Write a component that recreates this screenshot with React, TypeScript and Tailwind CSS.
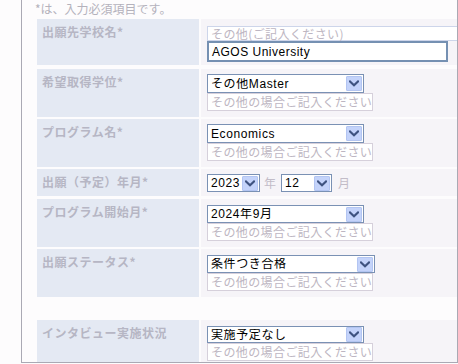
import React from "react";

const jp = "font-['Noto_Sans_CJK_JP','Liberation_Sans',sans-serif]";
const ui = "font-['Liberation_Sans','Noto_Sans_CJK_JP',sans-serif]";

function Chevron() {
  return (
    <svg width="10" height="7" viewBox="0 0 10 7">
      <path d="M1 1.5 L5 5.2 L9 1.5" fill="none" stroke="#3f5380" strokeWidth="2.2" strokeLinecap="square" />
    </svg>
  );
}

function Select({ value, w, h = 19 }: { value: string; w: number; h?: number }) {
  return (
    <div
      className="flex items-center bg-white border border-[#7a91b4] shrink-0"
      style={{ width: w, height: h }}
    >
      <span className={`flex-1 pl-[3px] text-[12px] leading-none text-black tracking-[0.6px] whitespace-nowrap overflow-hidden ${ui}`}>
        {value}
      </span>
      <div className="w-[16px] h-[15px] mr-[1px] flex items-center justify-center bg-[#c4d3fa] border border-[#b3c5f2] rounded-[1px]">
        <Chevron />
      </div>
    </div>
  );
}

function Hint({ w = 166, h = 18 }: { w?: number; h?: number }) {
  return (
    <div
      className={`flex items-center pl-[3px] bg-white border border-[#d6d0db] text-[12px] leading-none text-[#bdb6c2] tracking-[0.4px] whitespace-nowrap overflow-hidden ${jp}`}
      style={{ width: w, height: h }}
    >
      その他の場合ご記入ください
    </div>
  );
}

function Row({ label, h, mt, pt, children }: { label: string; h: number; mt: number; pt: number; children: React.ReactNode }) {
  return (
    <div className="flex gap-[2px] ml-[15px]" style={{ height: h, marginTop: mt }}>
      <div className={`w-[162px] bg-[#e4e9f3] pl-[5px] pt-[6px] text-[12px] leading-[14px] font-bold text-[#b6b6c4] tracking-[0.5px] whitespace-nowrap ${jp}`}>
        {label}
      </div>
      <div className="flex-1 bg-[#f6f4f8] pl-[6px] flex flex-col overflow-hidden" style={{ paddingTop: pt }}>
        {children}
      </div>
    </div>
  );
}

export default function App() {
  return (
    <div className="w-[458px] h-[364px] bg-[#fdfcfd] overflow-hidden">
      <div className="ml-[21px] w-[437px] h-[363px] border-l border-r border-b border-[#aaa9b4] overflow-hidden">
        <div className={`h-[19px] pl-[13px] text-[12px] leading-[17px] text-[#b4b2bc] ${jp}`}>
          *は、入力必須項目です。
        </div>

        <Row label="出願先学校名*" h={46} mt={0} pt={7}>
          <div
            className={`w-[260px] h-[15px] shrink-0 flex items-center pl-[3px] bg-white border border-[#cdd5ea] text-[12px] leading-none text-[#bdb6c2] tracking-[0.4px] whitespace-nowrap ${jp}`}
          >
            その他(ご記入ください)
          </div>
          <div className={`w-[241px] h-[21px] shrink-0 flex items-center pl-[3px] bg-white border-2 border-[#7590b2] text-[12px] leading-none text-black tracking-[0.5px] ${ui}`}>
            AGOS University
          </div>
        </Row>

        <Row label="希望取得学位*" h={48} mt={4} pt={5}>
          <Select value="その他Master" w={157} />
          <Hint />
        </Row>

        <Row label="プログラム名*" h={48} mt={2} pt={5}>
          <Select value="Economics" w={157} />
          <Hint />
        </Row>

        <Row label="出願（予定）年月*" h={27} mt={2} pt={5}>
          <div className="flex items-center">
            <Select value="2023" w={53} h={18} />
            <span className={`ml-[4px] w-[17px] text-[12px] leading-none text-[#c2bcc8] ${jp}`}>年</span>
            <Select value="12" w={51} h={18} />
            <span className={`ml-[6px] text-[12px] leading-none text-[#c2bcc8] ${jp}`}>月</span>
          </div>
        </Row>

        <Row label="プログラム開始月*" h={48} mt={3} pt={6}>
          <Select value="2024年9月" w={157} h={18} />
          <Hint />
        </Row>

        <Row label="出願ステータス*" h={48} mt={2} pt={6}>
          <Select value="条件つき合格" w={168} h={18} />
          <Hint />
        </Row>

        <Row label="インタビュー実施状況" h={42} mt={23} pt={6}>
          <Select value="実施予定なし" w={157} h={17} />
          <Hint />
        </Row>
      </div>
    </div>
  );
}
